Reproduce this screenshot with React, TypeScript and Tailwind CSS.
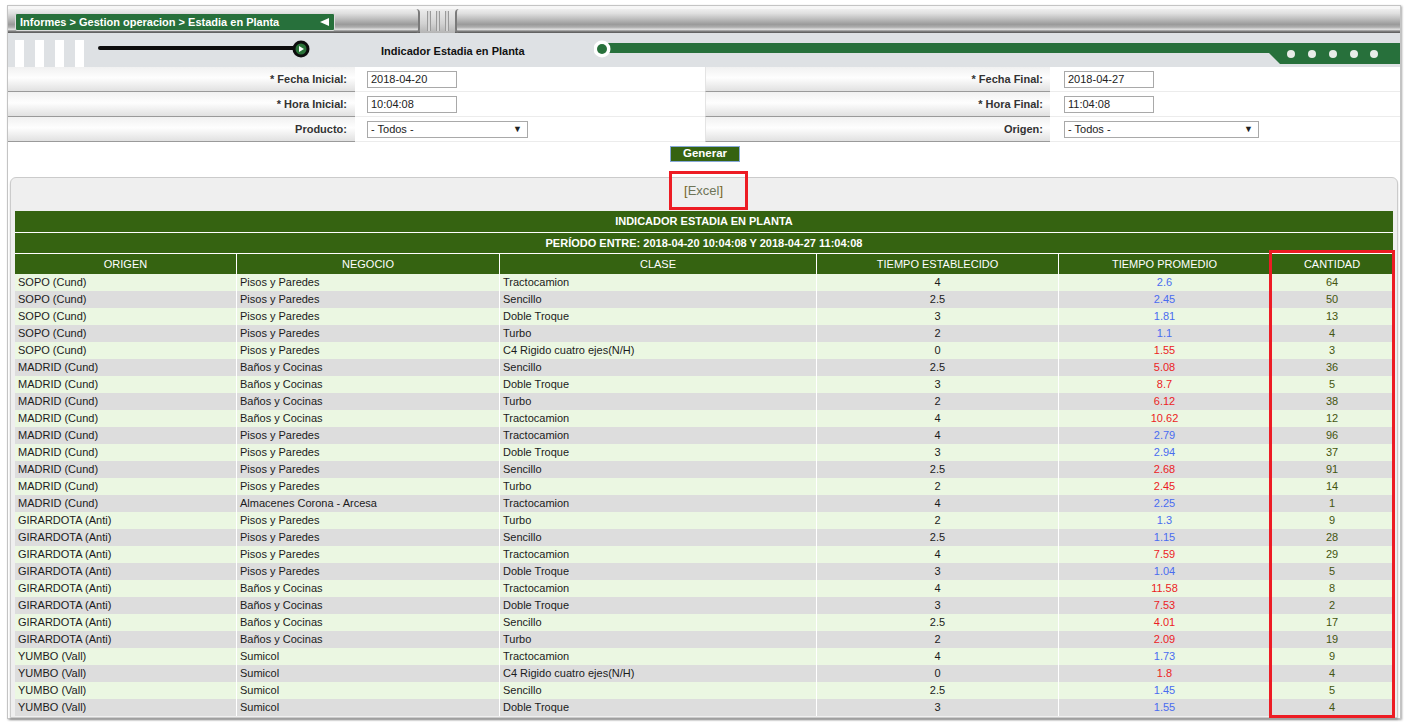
import React from "react";

type Row = [string, string, string, string, string, string];

const rows: Row[] = [
  ["SOPO (Cund)", "Pisos y Paredes", "Tractocamion", "4", "2.6", "64"],
  ["SOPO (Cund)", "Pisos y Paredes", "Sencillo", "2.5", "2.45", "50"],
  ["SOPO (Cund)", "Pisos y Paredes", "Doble Troque", "3", "1.81", "13"],
  ["SOPO (Cund)", "Pisos y Paredes", "Turbo", "2", "1.1", "4"],
  ["SOPO (Cund)", "Pisos y Paredes", "C4 Rigido cuatro ejes(N/H)", "0", "1.55", "3"],
  ["MADRID (Cund)", "Baños y Cocinas", "Sencillo", "2.5", "5.08", "36"],
  ["MADRID (Cund)", "Baños y Cocinas", "Doble Troque", "3", "8.7", "5"],
  ["MADRID (Cund)", "Baños y Cocinas", "Turbo", "2", "6.12", "38"],
  ["MADRID (Cund)", "Baños y Cocinas", "Tractocamion", "4", "10.62", "12"],
  ["MADRID (Cund)", "Pisos y Paredes", "Tractocamion", "4", "2.79", "96"],
  ["MADRID (Cund)", "Pisos y Paredes", "Doble Troque", "3", "2.94", "37"],
  ["MADRID (Cund)", "Pisos y Paredes", "Sencillo", "2.5", "2.68", "91"],
  ["MADRID (Cund)", "Pisos y Paredes", "Turbo", "2", "2.45", "14"],
  ["MADRID (Cund)", "Almacenes Corona - Arcesa", "Tractocamion", "4", "2.25", "1"],
  ["GIRARDOTA (Anti)", "Pisos y Paredes", "Turbo", "2", "1.3", "9"],
  ["GIRARDOTA (Anti)", "Pisos y Paredes", "Sencillo", "2.5", "1.15", "28"],
  ["GIRARDOTA (Anti)", "Pisos y Paredes", "Tractocamion", "4", "7.59", "29"],
  ["GIRARDOTA (Anti)", "Pisos y Paredes", "Doble Troque", "3", "1.04", "5"],
  ["GIRARDOTA (Anti)", "Baños y Cocinas", "Tractocamion", "4", "11.58", "8"],
  ["GIRARDOTA (Anti)", "Baños y Cocinas", "Doble Troque", "3", "7.53", "2"],
  ["GIRARDOTA (Anti)", "Baños y Cocinas", "Sencillo", "2.5", "4.01", "17"],
  ["GIRARDOTA (Anti)", "Baños y Cocinas", "Turbo", "2", "2.09", "19"],
  ["YUMBO (Vall)", "Sumicol", "Tractocamion", "4", "1.73", "9"],
  ["YUMBO (Vall)", "Sumicol", "C4 Rigido cuatro ejes(N/H)", "0", "1.8", "4"],
  ["YUMBO (Vall)", "Sumicol", "Sencillo", "2.5", "1.45", "5"],
  ["YUMBO (Vall)", "Sumicol", "Doble Troque", "3", "1.55", "4"],
];

const gridCols = "grid grid-cols-[221px_262px_316px_241px_211px_1fr] gap-x-px bg-white";

function FieldBox({ value, w }: { value: string; w: string }) {
  return (
    <div className={`${w} flex h-[17px] items-center border border-[#a9a9a9] bg-white pl-[3px] text-[11px] text-[#222]`}>
      {value}
    </div>
  );
}

function SelectBox({ w }: { w: string }) {
  return (
    <div className={`${w} flex h-[17px] items-center justify-between border border-[#a9a9a9] bg-white pl-[3px] pr-[5px] text-[11px] text-[#222]`}>
      <span>- Todos -</span>
      <span className="text-[9px] leading-none">▼</span>
    </div>
  );
}

function FormRow({
  l1,
  c1,
  l2,
  c2,
}: {
  l1: React.ReactNode;
  c1: React.ReactNode;
  l2: React.ReactNode;
  c2: React.ReactNode;
}) {
  const label =
    "flex h-full items-center justify-end border-b border-[#9a9a9a] bg-[linear-gradient(to_bottom,#f1f1f1,#fefefe_45%,#e1e1e1)] text-[11px] font-bold text-[#333]";
  return (
    <div className="flex h-[25px]">
      <div className={`${label} w-[347px] pr-[8px]`}>{l1}</div>
      <div className="flex h-full w-[350px] items-center border-b border-[#ececec] pl-[12px]">{c1}</div>
      <div className={`${label} w-[345px] border-l border-l-[#e4e4e4] pr-[7px]`}>{l2}</div>
      <div className="flex h-full flex-1 items-center border-b border-[#ececec] pl-[14px]">{c2}</div>
    </div>
  );
}

const ridge = "w-[4px] bg-[linear-gradient(to_right,#7c7c7c,#f4f4f4,#7c7c7c)]";

export default function App() {
  return (
    <div className="min-h-screen bg-white pl-[7px] pt-[5px] font-['Liberation_Sans',Arial,sans-serif]">
      <div className="w-[1394px] border border-[#c4c4c4] bg-white shadow-[1px_1px_2px_rgba(0,0,0,0.35)]">
        {/* top spacer */}
        <div className="h-[3px] bg-[#f6f6f6]" />
        {/* metallic bar */}
        <div className="flex h-[24px] bg-[linear-gradient(to_bottom,#eeeeee_0%,#e0e0e0_18%,#bdbdbd_42%,#9a9a9a_64%,#afafaf_76%,#e2e2e2_85%,#858585_92%,#575757_100%)]">
          <div className="ml-[7px] mt-[4px] flex h-[18px] w-[320px] items-center justify-between rounded-[2px] border border-[#dcdcdc] bg-[#27703b] pl-[4px] pr-[5px]">
            <span className="text-[11px] font-bold leading-none text-white">
              Informes &gt; Gestion operacion &gt; Estadia en Planta
            </span>
            <svg width="9" height="8" viewBox="0 0 9 8">
              <polygon points="0,4 9,0 9,8" fill="#ffffff" />
            </svg>
          </div>
          <div className="w-[85px] rounded-r-[4px] border-r-2 border-[#7a7a7a]" />
          <div className="flex w-[35px] items-stretch justify-center gap-[5px] bg-[linear-gradient(to_bottom,#ececec,#d2d2d2_60%,#b4b4b4)] px-[4px] py-[2px]">
            <div className={ridge} />
            <div className={ridge} />
            <div className={ridge} />
          </div>
          <div className="flex-1 rounded-l-[4px] border-l-2 border-[#7a7a7a]" />
        </div>
        {/* band */}
        <div className="flex h-[34px] bg-[#dee1e4]">
          <div className="flex h-full items-end gap-[11px] pl-[7px]">
            <div className="h-[27px] w-[9px] bg-white" />
            <div className="h-[27px] w-[9px] bg-white" />
            <div className="h-[27px] w-[9px] bg-white" />
            <div className="h-[27px] w-[9px] bg-white" />
          </div>
          <svg className="ml-[6px]" width="226" height="34" viewBox="0 0 226 34">
            <rect x="8" y="13" width="200" height="4" rx="2" fill="#0d0d0d" />
            <circle cx="211" cy="16" r="8.5" fill="#0d0d0d" />
            <circle cx="211" cy="16" r="5.5" fill="#2a7238" />
            <polygon points="209,13 209,19 214,16" fill="#ffffff" />
          </svg>
          <div className="ml-[65px] w-[213px] pt-[12px] text-[11px] font-bold leading-[12px] text-[#111]">
            Indicador Estadia en Planta
          </div>
          <svg width="806" height="34" viewBox="0 0 806 34">
            <rect x="14" y="10" width="792" height="10" fill="#27703b" />
            <polygon points="674,19 686,31 806,31 806,19" fill="#27703b" />
            <circle cx="8" cy="16" r="8.5" fill="#ffffff" />
            <circle cx="8" cy="16" r="5" fill="#27703b" />
            <circle cx="697" cy="21" r="4" fill="#e8ece8" />
            <circle cx="718" cy="21" r="4" fill="#e8ece8" />
            <circle cx="739" cy="21" r="4" fill="#e8ece8" />
            <circle cx="760" cy="21" r="4" fill="#e8ece8" />
            <circle cx="780" cy="21" r="4" fill="#e8ece8" />
          </svg>
        </div>
        {/* form */}
        <FormRow
          l1="* Fecha Inicial:"
          c1={<FieldBox value="2018-04-20" w="w-[90px]" />}
          l2="* Fecha Final:"
          c2={<FieldBox value="2018-04-27" w="w-[90px]" />}
        />
        <FormRow
          l1="* Hora Inicial:"
          c1={<FieldBox value="10:04:08" w="w-[90px]" />}
          l2="* Hora Final:"
          c2={<FieldBox value="11:04:08" w="w-[90px]" />}
        />
        <FormRow
          l1="Producto:"
          c1={<SelectBox w="w-[161px]" />}
          l2="Origen:"
          c2={<SelectBox w="w-[195px]" />}
        />
        <div className="flex h-[35px] justify-center pl-[2px] pt-[4px]">
          <div className="flex h-[16px] w-[70px] items-center justify-center border border-[#86a8d8] bg-[#356311] text-[11.5px] font-bold leading-none text-white">
            Generar
          </div>
        </div>
        {/* panel */}
        <div className="mx-[2px] rounded-t-[6px] border border-[#cbcbcb] bg-[#efefef] px-[4px] pb-[1px] shadow-[0_2px_2px_rgba(0,0,0,0.2)]">
          <div className="-mt-[7px] ml-[654px] flex h-[39px] w-[79px] items-center border-[3px] border-[#ed1c24] pl-[12px] text-[13px]">
            <span className="text-[#7a6520]">[</span>
            <span className="text-[#6e7458]">Excel</span>
            <span className="text-[#7a6520]">]</span>
          </div>
          <div className="relative mt-[1px]">
            <div className="flex flex-col gap-px bg-white">
              <div className="flex h-[21px] items-center justify-center bg-[#356311] text-[11px] font-bold text-white">
                INDICADOR ESTADIA EN PLANTA
              </div>
              <div className="flex h-[20px] items-center justify-center bg-[#356311] text-[11px] font-bold text-white">
                PERÍODO ENTRE: 2018-04-20 10:04:08 Y 2018-04-27 11:04:08
              </div>
              <div className={`${gridCols} h-[20px]`}>
                {["ORIGEN", "NEGOCIO", "CLASE", "TIEMPO ESTABLECIDO", "TIEMPO PROMEDIO", "CANTIDAD"].map((h) => (
                  <div key={h} className="flex items-center justify-center bg-[#356311] text-[11px] text-white">
                    {h}
                  </div>
                ))}
              </div>
            </div>
            {rows.map((r, i) => {
              const bg = i % 2 === 0 ? "bg-[#ebf7e2]" : "bg-[#dddddd]";
              const over = parseFloat(r[4]) > parseFloat(r[3]);
              return (
                <div key={i} className={`${gridCols} h-[17px] text-[11px] leading-[17px]`}>
                  <div className={`${bg} whitespace-nowrap px-[3px] text-[#1b1b1b]`}>{r[0]}</div>
                  <div className={`${bg} whitespace-nowrap px-[3px] text-[#1b1b1b]`}>{r[1]}</div>
                  <div className={`${bg} whitespace-nowrap px-[3px] text-[#1b1b1b]`}>{r[2]}</div>
                  <div className={`${bg} text-center text-[#1b1b1b]`}>{r[3]}</div>
                  <div className={`${bg} text-center ${over ? "text-[#ec1c24]" : "text-[#4a6cf0]"}`}>{r[4]}</div>
                  <div className={`${bg} text-center text-[#44550f]`}>{r[5]}</div>
                </div>
              );
            })}
            <div className="pointer-events-none absolute left-[1254px] top-[39px] h-[468px] w-[126px] border-[3px] border-[#ed1c24]" />
          </div>
        </div>
      </div>
    </div>
  );
}
